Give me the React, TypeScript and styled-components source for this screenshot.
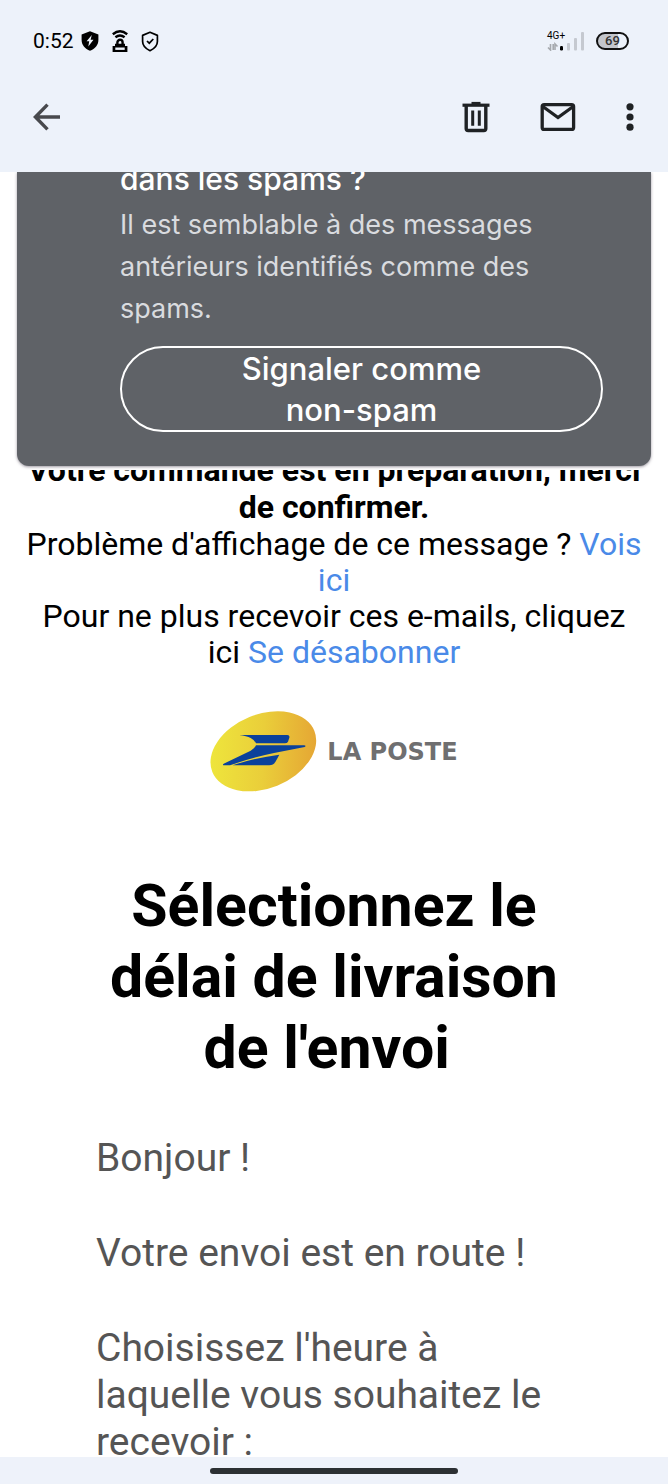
import React from "react";
import styled, { createGlobalStyle } from "styled-components";

const GlobalStyle = createGlobalStyle`
  *, *::before, *::after { box-sizing: border-box; }
  html, body { margin: 0; padding: 0; }
  body { background: #fff; color: #000; font-family: Roboto, sans-serif; }
  h1, h2, p { margin: 0; }
  svg { display: block; flex: none; }
`;

const Screen = styled.div`
  display: flex;
  flex-direction: column;
  height: 100vh;
  overflow: hidden;
`;

const Header = styled.header`
  flex: none;
  background: #edf2fa;
  padding-bottom: 24px;
`;

const StatusBar = styled.div`
  display: flex;
  align-items: center;
  justify-content: space-between;
  height: 82px;
  padding: 0 39px 0 33px;
`;

const StatusGroup = styled.div<{ $gap: number }>`
  display: flex;
  align-items: center;
  gap: ${(p) => p.$gap}px;
`;

const Clock = styled.time`
  font-size: 21px;
  line-height: 24px;
  font-weight: 400;
  margin-right: -6px;
`;

const Network = styled.div`
  display: grid;
  width: 38px;
  & > * { grid-area: 1 / 1; }
`;

const NetworkLabel = styled.span`
  font-size: 10px;
  line-height: 8px;
`;

const Battery = styled.span`
  display: flex;
  align-items: center;
  justify-content: center;
  width: 33px;
  height: 18px;
  border: 2px solid #111;
  border-radius: 9px;
  background: linear-gradient(90deg, #c3c6cc 68%, #edf2fa 68%);
  color: #333;
  font-size: 13px;
  line-height: 14px;
  font-weight: 500;
`;

const Toolbar = styled.nav`
  display: flex;
  align-items: center;
  justify-content: space-between;
  height: 66px;
  padding: 4px 26px 0 25px;
`;

const Actions = styled.div`
  display: flex;
  align-items: center;
  gap: 38px;
`;

const IconButton = styled.button<{ $narrow?: boolean }>`
  display: flex;
  align-items: center;
  justify-content: center;
  height: 44px;
  width: ${(p) => (p.$narrow ? 24 : 44)}px;
  padding: 0;
  border: 0;
  background: none;
  color: #1f2224;
`;

const Main = styled.main`
  flex: 1;
  min-height: 0;
  overflow: hidden;
`;

const SpamCard = styled.section`
  margin: 0 17px;
  padding: 0 48px 34px 103px;
  border-radius: 0 0 12px 12px;
  background: #5f6267;
  color: #fff;
  font-family: Inter, sans-serif;
  box-shadow: 0 1px 3px rgba(60, 50, 70, 0.5);
`;

const ScrolledOff = styled.div<{ $height: number }>`
  display: flex;
  flex-direction: column;
  justify-content: flex-end;
  height: ${(p) => p.$height}px;
  overflow: hidden;
`;

const SpamTitle = styled.h2`
  padding-bottom: 4px;
  font-size: 30px;
  line-height: 42px;
  font-weight: 500;
`;

const SpamText = styled.p`
  color: #d9dbdf;
  font-size: 27px;
  line-height: 42px;
`;

const SpamButton = styled.button`
  display: block;
  width: 100%;
  height: 86px;
  margin-top: 16px;
  padding: 0 100px;
  border: 2px solid #fff;
  border-radius: 43px;
  background: none;
  color: #fff;
  font: 500 31px/41px Inter, sans-serif;
`;

const Notice = styled.section`
  margin-top: 4px;
  padding: 0 26px;
  text-align: center;
  font-size: 32px;
`;

const NoticeTitle = styled.p`
  flex: none;
  font-weight: 700;
  line-height: 37px;
`;

const NoticeText = styled.p`
  line-height: 36px;
`;

const Link = styled.a`
  color: #4a8ae8;
  text-decoration: none;
`;

const Brand = styled.div`
  display: flex;
  align-items: center;
  justify-content: center;
  gap: 10px;
  margin-top: 41px;
`;

const BrandName = styled.span`
  color: #6f6f70;
  font: 700 24px/30px "DejaVu Sans", sans-serif;
`;

const Letter = styled.article`
  padding: 0 96px;
`;

const LetterTitle = styled.h1`
  margin-top: 78px;
  text-align: center;
  font-size: 59px;
  line-height: 71px;
  font-weight: 700;
`;

const LetterBody = styled.div`
  display: flex;
  flex-direction: column;
  gap: 48px;
  margin-top: 52px;
  color: #555;
  font-size: 39px;
  line-height: 47px;
`;

const Footer = styled.footer`
  flex: none;
  display: flex;
  justify-content: center;
  height: 27px;
  padding-top: 11px;
  background: #eef2fa;
`;

const HomeIndicator = styled.span`
  width: 37%;
  height: 6px;
  border-radius: 3px;
  background: #2c3033;
`;

const BoltShield = () => (
  <svg width="18" height="20" viewBox="0 0 18 20" aria-hidden="true">
    <path d="M9 .3 17.4 3.6V9c0 5-3.3 8.800-8.400 10.700C3.900 17.800.6 14 .6 9V3.600Z" fill="#000" />
    <path d="M10.800 4 5.600 10.300h2.600l-.9 5.200 5.200-6.800H9.600Z" fill="#edf2fa" />
  </svg>
);

const HotspotLock = () => (
  <svg width="16" height="22" viewBox="0 0 16 22" fill="none" stroke="#000" aria-hidden="true">
    <path d="M.8 4.200Q8-1.600 15.200 4.200M3.400 7.200Q8 3.600 12.600 7.200" strokeWidth="2.400" />
    <path d="M5.400 15v-2.600a2.600 2.600 0 0 1 5.200 0V15" strokeWidth="2.400" />
    <path d="M3 13.800h10V16h2.400v6H.6v-6H3Z" fill="#000" stroke="none" />
    <path d="M3.300 18.700h9.400" stroke="#edf2fa" strokeWidth="2.400" />
  </svg>
);

const CheckShield = () => (
  <svg width="18" height="21" viewBox="0 0 18 21" fill="none" stroke="#000" aria-hidden="true">
    <path d="M9 1.300 16.400 4.400v6.200c0 4-2.800 7-7.400 9.100-4.600-2.100-7.400-5.100-7.400-9.100V4.400Z" strokeWidth="1.700" strokeLinejoin="round" />
    <path d="m6 10 2.300 2.200 4-4.200" strokeWidth="1.700" />
  </svg>
);

const SignalBars = () => (
  <svg width="38" height="19" viewBox="0 0 38 19" aria-hidden="true">
    <g fill="none" stroke="#a6a9ae" strokeWidth="1.600">
      <path d="M3.500 12v6L1 15.500M6.200 18v-6M8 18v-6l2.500 2.500" />
    </g>
    <rect x="13" y="14" width="3" height="4.500" rx="1.200" fill="#000" />
    <g fill="#c5c9d0">
      <rect x="20" y="11" width="3" height="7.500" rx="1" />
      <rect x="27" y="6" width="3" height="12.500" rx="1" />
      <rect x="34" y="0" width="3" height="18.500" rx="1" />
    </g>
  </svg>
);

const BackArrow = () => (
  <svg width="28" height="28" viewBox="0 0 28 28" fill="none" stroke="#48494d" strokeWidth="3.400" aria-hidden="true">
    <path d="M14.500 1.600 2.400 14l12.100 12.400M2.400 14H27" />
  </svg>
);

const TrashIcon = () => (
  <svg width="28" height="32" viewBox="0 0 28 32" fill="none" stroke="currentColor" aria-hidden="true">
    <path d="M.5 4.200h27" strokeWidth="3.200" />
    <path d="M9.500 2.500h9" strokeWidth="3.200" />
    <path d="M4.200 5v22.500q0 2 2 2h15.600q2 0 2-2V5" strokeWidth="3.400" />
    <path d="M10.700 9.500v15.200M17.300 9.500v15.200" strokeWidth="3" />
  </svg>
);

const MailIcon = () => (
  <svg width="36" height="30" viewBox="0 0 36 30" fill="none" stroke="currentColor" strokeWidth="3.300" aria-hidden="true">
    <rect x="2.200" y="2.600" width="31.400" height="24.800" rx="2" />
    <path d="M2.800 4.500 18 15.500 33.200 4.500" />
  </svg>
);

const MoreIcon = () => (
  <svg width="8" height="28" viewBox="0 0 8 28" fill="currentColor" aria-hidden="true">
    <circle cx="4" cy="3.800" r="3.600" />
    <circle cx="4" cy="14" r="3.600" />
    <circle cx="4" cy="24.200" r="3.600" />
  </svg>
);

const PosteLogo = () => (
  <svg width="107" height="81" viewBox="30 35 321 243" aria-hidden="true">
    <defs>
      <linearGradient id="gold" x1="0" y1="0.350" x2="1" y2="0.650">
        <stop offset="0" stopColor="#eee63c" />
        <stop offset="0.500" stopColor="#eace3a" />
        <stop offset="1" stopColor="#e5a534" />
      </linearGradient>
    </defs>
    <ellipse cx="190" cy="156" rx="165" ry="111" transform="rotate(-22 190 156)" fill="url(#gold)" />
    <g fill="#0a419b">
      <path d="M118 107H262Q270 108 268 115L264 127Q262 132 254 132H168Q164 122 152 116Q140 110 118 107Z" />
      <path d="M168 138H312Q320 138 314 143L222 161Q150 176 90 198H70Q66 196 74 192L152 154Q164 148 168 138Z" />
      <path d="M98 198Q160 177 238 166L226 188Q220 198 208 198Z" />
    </g>
  </svg>
);

export default function App() {
  return (
    <>
      <GlobalStyle />
      <Screen>
        <Header>
          <StatusBar>
            <StatusGroup $gap={13}>
              <Clock>0:52</Clock>
              <BoltShield />
              <HotspotLock />
              <CheckShield />
            </StatusGroup>
            <StatusGroup $gap={11}>
              <Network>
                <NetworkLabel>4G+</NetworkLabel>
                <SignalBars />
              </Network>
              <Battery>69</Battery>
            </StatusGroup>
          </StatusBar>
          <Toolbar>
            <IconButton aria-label="Retour">
              <BackArrow />
            </IconButton>
            <Actions>
              <IconButton aria-label="Supprimer">
                <TrashIcon />
              </IconButton>
              <IconButton aria-label="Marquer comme non lu">
                <MailIcon />
              </IconButton>
              <IconButton $narrow aria-label="Plus d'options">
                <MoreIcon />
              </IconButton>
            </Actions>
          </Toolbar>
        </Header>
        <Main>
          <SpamCard>
            <ScrolledOff $height={32}>
              <SpamTitle>dans les spams ?</SpamTitle>
            </ScrolledOff>
            <SpamText>
              Il est semblable à des messages antérieurs identifiés comme des spams.
            </SpamText>
            <SpamButton>Signaler comme non-spam</SpamButton>
          </SpamCard>
          <Notice>
            <ScrolledOff $height={56}>
              <NoticeTitle>Votre commande est en préparation, merci de confirmer.</NoticeTitle>
            </ScrolledOff>
            <NoticeText>
              Problème d'affichage de ce message ? <Link href="#voir">Vois ici</Link>
            </NoticeText>
            <NoticeText>
              Pour ne plus recevoir ces e-mails, cliquez ici <Link href="#desabonner">Se désabonner</Link>
            </NoticeText>
          </Notice>
          <Brand>
            <PosteLogo />
            <BrandName>LA POSTE</BrandName>
          </Brand>
          <Letter>
            <LetterTitle>Sélectionnez le délai de livraison de l'envoi&nbsp;</LetterTitle>
            <LetterBody>
              <p>Bonjour !</p>
              <p>Votre envoi est en route !</p>
              <p>Choisissez l'heure à laquelle vous souhaitez le recevoir :</p>
            </LetterBody>
          </Letter>
        </Main>
        <Footer>
          <HomeIndicator />
        </Footer>
      </Screen>
    </>
  );
}
